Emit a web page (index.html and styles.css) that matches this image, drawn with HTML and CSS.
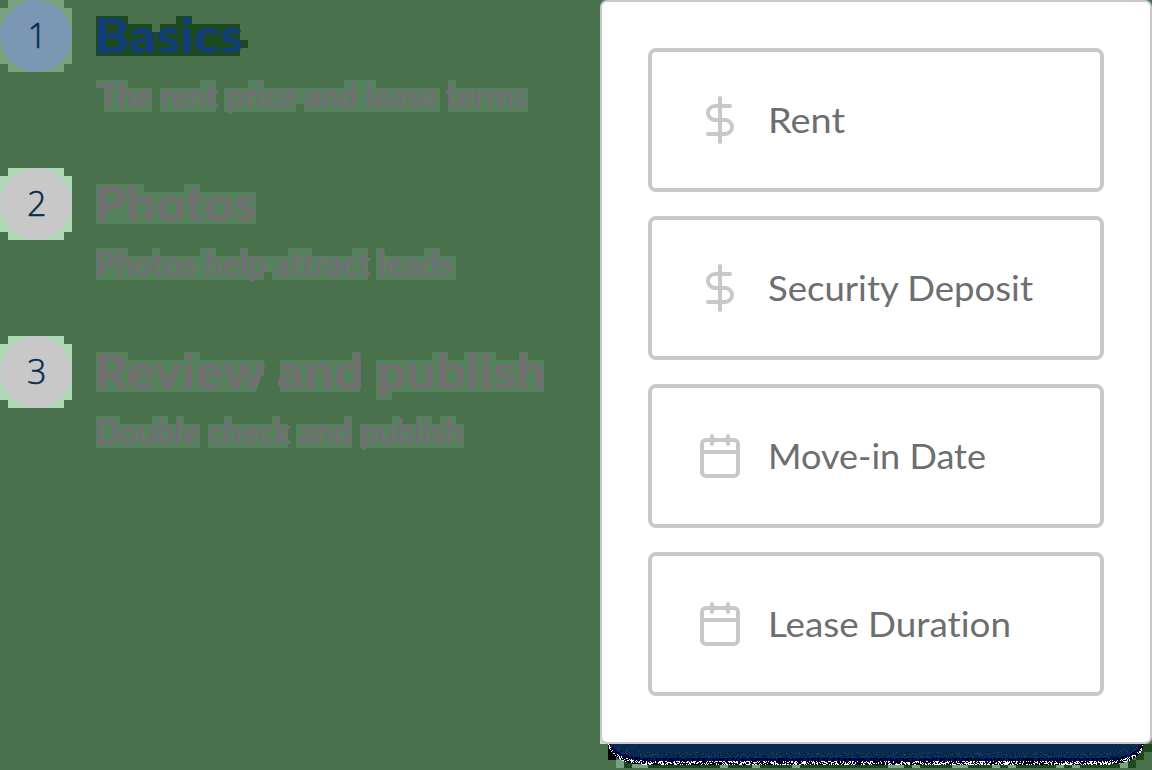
FILE: index.html
```html
<!DOCTYPE html>
<html lang="en">
<head>
<meta charset="utf-8">
<title>Listing setup</title>
<link rel="stylesheet" href="styles.css">
</head>
<body>
<main class="page">
  <section class="steps">
    <div class="step active">
      <svg class="badge" viewBox="0 0 72 72"><path class="halo" d="M8 0H64V8H72V64H64V72H8V64H0V8H8Z"/><circle cx="36" cy="36" r="36"/><text x="27.5" y="48" textLength="19">1</text></svg>
      <svg class="copy" viewBox="96 0 480 120">
        <path class="halo-dark" d="M96 16h32v8h24v8h8v-8h16v-8h16v8h48v16h8v8h-8v8H96Z"/>
        <path class="halo" d="M96 80h32v8h24v24h-48V88h-8Z M160 88h40v-8h16v32h-56Z M224 88h24v-8h16v8h80v-8h32v8h64v8h8V80h8v8h72v24h-80v-16h-8v16H304v-8h-8v8h-72Z"/>
        <text class="title" x="94" y="53" textLength="149" lengthAdjust="spacingAndGlyphs">Basics</text>
        <text class="sub" x="98" y="108" textLength="429" lengthAdjust="spacingAndGlyphs">The rent price and lease terms</text>
      </svg>
    </div>
    <div class="step">
      <svg class="badge" viewBox="0 0 72 72"><path class="halo" d="M8 0H64V8H72V64H64V72H8V64H0V8H8Z"/><circle cx="36" cy="36" r="36"/><text x="27" y="48" textLength="20">2</text></svg>
      <svg class="copy" viewBox="96 0 480 120">
        <path class="halo" d="M96 16h48v8h40v-8h16v8h56v32H96Z M96 80h32v8h24v-8h8v8h40v-8h16v8h24v-8h8v8h40v-8h24v8h40v-8h16v32h-96v-8h-8v8H96Z M376 80h8v8h40v-8h16v8h16v24h-80Z"/>
        <text class="title" x="94" y="53" textLength="163" lengthAdjust="spacingAndGlyphs">Photos</text>
        <text class="sub" x="95" y="108" textLength="358" lengthAdjust="spacingAndGlyphs">Photos help attract leads</text>
      </svg>
    </div>
    <div class="step">
      <svg class="badge" viewBox="0 0 72 72"><path class="halo" d="M8 0H64V8H72V64H64V72H8V64H0V8H8Z"/><circle cx="36" cy="36" r="36"/><text x="27" y="48" textLength="20">3</text></svg>
      <svg class="copy" viewBox="96 0 480 120">
        <path class="halo" d="M96 16h32v8h56v-8h16v8h64v16h-8v16H96Z M280 24h72v-8h8v40h-80Z M376 24h56v-8h16v8h16v-8h32v8h24v-8h8v8h16v32H392v8h-16Z M96 80h24v8h32v-8h16v8h8v-8h8v8h16v24H96Z M208 88h16v-8h8v8h40v-8h8v8h8v24h-80Z M296 88h48v-8h8v32h-56Z M360 88h32v-8h8v8h16v-8h16v8h8v-8h16v8h8v24H360Z"/>
        <text class="title" x="94" y="53" textLength="452" lengthAdjust="spacingAndGlyphs">Review and publish</text>
        <text class="sub" x="95" y="108" textLength="368" lengthAdjust="spacingAndGlyphs">Double check and publish</text>
      </svg>
    </div>
  </section>
  <section class="panel">
    <div class="card">
      <div class="field">
        <svg class="icon" viewBox="696 96 48 48"><path d="M720 98V142M730 106H715a7 7 0 0 0 0 14h10a7 7 0 0 1 0 14H708"/></svg>
        <svg class="label" viewBox="0 0 300 60"><text x="0" y="42.5" textLength="77" lengthAdjust="spacingAndGlyphs">Rent</text></svg>
      </div>
      <div class="field">
        <svg class="icon" viewBox="696 96 48 48"><path d="M720 98V142M730 106H715a7 7 0 0 0 0 14h10a7 7 0 0 1 0 14H708"/></svg>
        <svg class="label" viewBox="0 0 300 60"><text x="0" y="42.5" textLength="265" lengthAdjust="spacingAndGlyphs">Security Deposit</text></svg>
      </div>
      <div class="field">
        <svg class="icon" viewBox="696 432 48 48"><path d="M706 440h28a4 4 0 0 1 4 4v28a4 4 0 0 1-4 4h-28a4 4 0 0 1-4-4v-28a4 4 0 0 1 4-4ZM702 452h36M712 436v8M728 436v8"/></svg>
        <svg class="label" viewBox="0 0 300 60"><text x="0" y="42.5" textLength="218" lengthAdjust="spacingAndGlyphs">Move-in Date</text></svg>
      </div>
      <div class="field">
        <svg class="icon" viewBox="696 432 48 48"><path d="M706 440h28a4 4 0 0 1 4 4v28a4 4 0 0 1-4 4h-28a4 4 0 0 1-4-4v-28a4 4 0 0 1 4-4ZM702 452h36M712 436v8M728 436v8"/></svg>
        <svg class="label" viewBox="0 0 300 60"><text x="0" y="42.5" textLength="243" lengthAdjust="spacingAndGlyphs">Lease Duration</text></svg>
      </div>
    </div>
    <canvas class="shadow" width="552" height="26"></canvas>
  </section>
</main>
<script src="shadow.js"></script>
</body>
</html>
```
FILE: styles.css
```css
* { box-sizing: border-box; }
body { margin: 0; background: #49724c; font-family: Lato, "Open Sans", sans-serif; font-variant-ligatures: none; }
.page { display: flex; width: 1152px; height: 770px; overflow: hidden; }
.steps { width: 600px; display: flex; flex-direction: column; gap: 48px; }
.step { display: flex; gap: 24px; height: 120px; }
.badge { width: 72px; height: 72px; flex: none; }
.badge circle { fill: #c8c8c8; }
.badge .halo { fill: #abdab4; }
.badge text { font-family: "Open Sans", Lato, sans-serif; font-size: 34px; font-weight: 300; fill: #092b50; stroke: #092b50; stroke-width: .5px; }
.active .badge circle { fill: #7c97b3; }
.active .badge .halo { fill: #7ba27f; }
.copy { width: 480px; height: 120px; flex: none; overflow: visible; }
.halo { fill: #56835d; }
.halo-dark { fill: #1c491f; }
.title { font-size: 47px; font-weight: 900; fill: #737072; }
.active .title { fill: #103c78; }
.sub { font-size: 35px; font-weight: 700; fill: #746f76; }
.panel { width: 552px; flex: none; background: linear-gradient(#d5ddd6, #d5ddd6) 0 736px / 8px 8px no-repeat; }
.card { height: 744px; padding: 46px; display: flex; flex-direction: column; gap: 24px; background: #fff; border: 2px solid #c8c8c8; border-radius: 7px; }
.field { height: 144px; display: flex; align-items: center; gap: 24px; padding-left: 44px; border: 4px solid #c8c8c8; border-radius: 8px; }
.icon { width: 48px; height: 48px; flex: none; fill: none; stroke: #c8c8c8; stroke-width: 4; stroke-linecap: round; stroke-linejoin: round; }
.label { width: 300px; height: 60px; flex: none; overflow: visible; }
.label text { font-size: 35px; fill: #6d6e70; }
.shadow { display: block; width: 552px; height: 26px; }
```
FILE: shadow.js
```js
// Speckled band below the card, drawn pixel by pixel from a fixed seed.
const ctx = document.querySelector('.shadow').getContext('2d');
let seed = 7;
const rnd = () => (seed = (seed * 16807) % 2147483647) / 2147483647;
for (let x = 16; x < 536; x += 8) {
  ctx.fillStyle = rnd() < 0.3 ? '#7ba27f' : '#1c491f';
  ctx.fillRect(x, 16, 8, 8);
}
ctx.fillStyle = '#000';
ctx.fillRect(8, 0, 8, 16);
ctx.fillStyle = '#1c491f';
ctx.fillRect(536, 0, 8, 16);
ctx.fillRect(544, 0, 8, 8);
const pick = list => list[Math.floor(rnd() * list.length)];
for (let x = 8; x < 544; x++) {
  for (let y = 0; y < 22; y++) {
    const edge = Math.min(x - 8, 543 - x);
    const t = Math.max(0, 1 - edge / 34);
    const d = 20 * Math.sqrt(1 - t * t) - y;
    if (d < 0) continue;
    if (d < 4) ctx.fillStyle = pick(['#000', '#000', '#fff', '#fff', '#03044a']);
    else if (d < 7) ctx.fillStyle = pick(['#000080', '#00005a', '#000', '#08264a']);
    else if (d < 13) ctx.fillStyle = pick(['#08264d', '#153f59', '#0b2b50', '#07204a']);
    else ctx.fillStyle = '#092a51';
    ctx.fillRect(x, y, 1, 1);
  }
}
```
